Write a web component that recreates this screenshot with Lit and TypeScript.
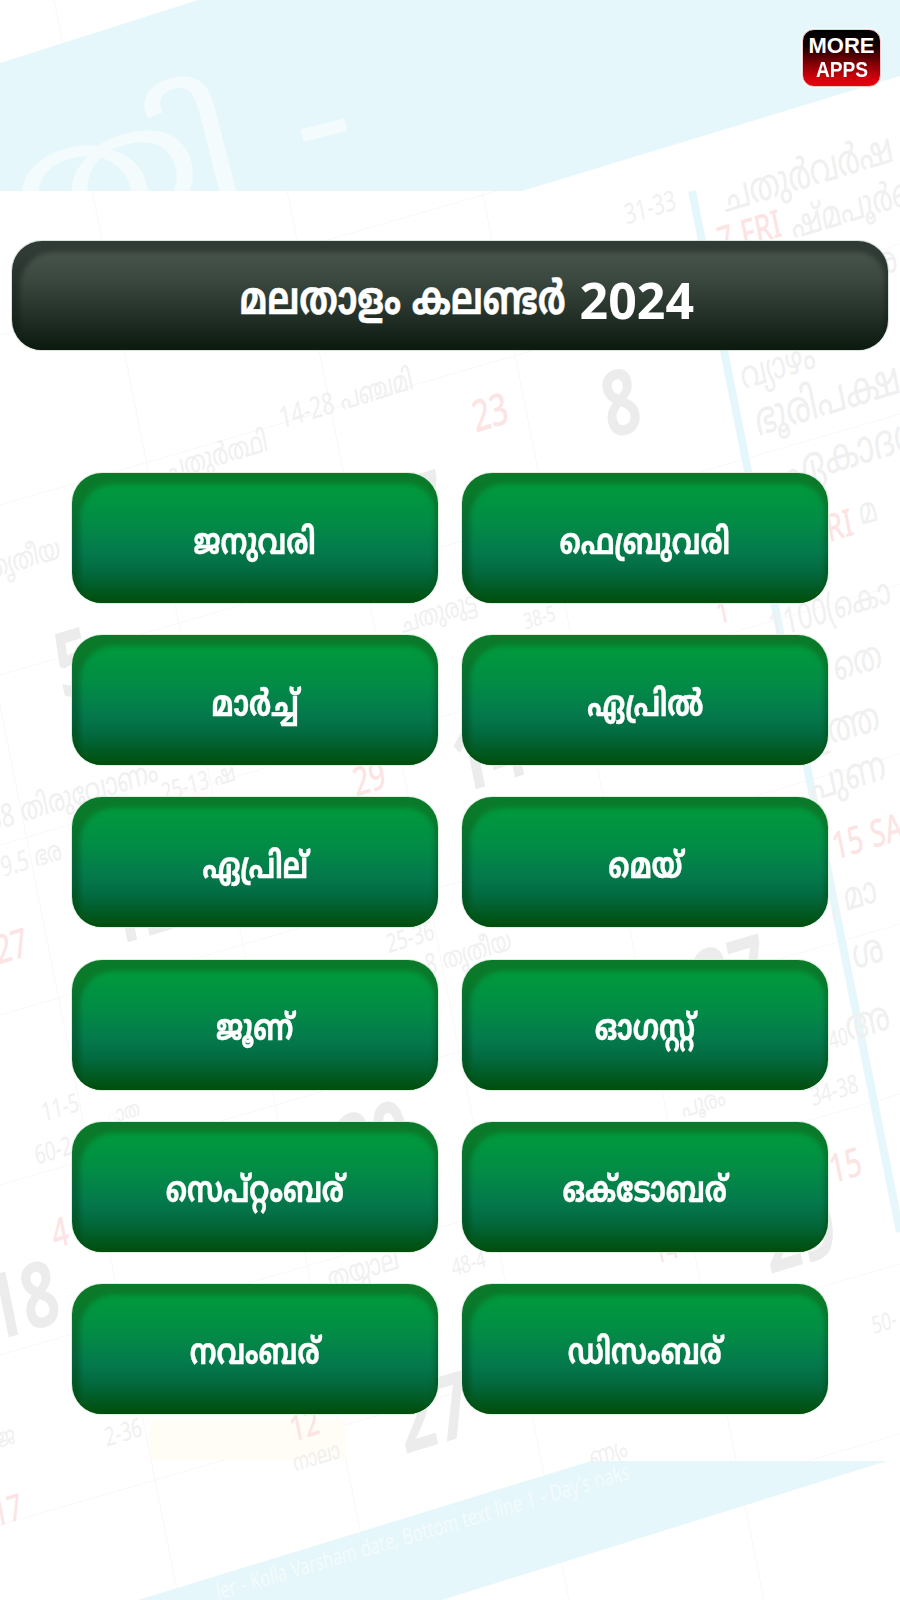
import { LitElement, html, css, svg } from "lit";
import { customElement } from "lit/decorators.js";

const MONTHS = ["ജനുവരി","ഫെബ്രുവരി","മാർച്ച്","ഏപ്രിൽ","ഏപ്രില്","മെയ്","ജൂണ്","ഓഗസ്റ്റ്","സെപ്റ്റംബര്","ഒക്ടോബര്","നവംബര്","ഡിസംബര്"];

type Mark = [number, number, string, number];
const GREY: Mark[] = [[627,402,"8",90],[432,505,"7",90],[80,662,"5",90],[495,752,"14",90],[147,905,"12",90],[737,975,"27",90],[380,1140,"20",90],[28,1300,"18",90],[805,1232,"29",90],[440,1412,"27",90]];
const RED: Mark[] = [[493,412,"23",44],[372,778,"29",40],[14,946,"27",40],[752,232,"7 FRI",38],[842,525,"RI",38],[870,836,"15 SA",38],[63,1232,"4",40],[848,1165,"15",40],[307,1425,"12",36],[10,1510,"17",36],[668,1250,"14",30],[725,612,"1",30]];
const SMALL: Mark[] = [[652,207,"31-33",28],[348,398,"14-28 പഞ്ചമി",30],[218,455,"ചതുർത്ഥി",30],[25,558,"തൃതീയ",30],[440,612,"ചതുരുട്ട",28],[541,617,"38-5",22],[75,795,"38 തിരുവോണം",32],[200,782,"25-13 ഷ",26],[33,858,"9.5 ഭര",28],[412,937,"25-36",26],[470,952,"8 തൃതീയ",28],[62,1107,"11-5",26],[55,1150,"60-2",26],[125,1112,"ാത",22],[365,1268,"തയ്യാല",30],[470,1263,"48-4",24],[840,1038,"40",24],[836,1090,"34-38",26],[705,1102,"പൂരം",26],[886,1322,"50-",24],[125,1432,"2-36",26],[8,1436,"ജ",26],[810,172,"ചതുർവർഷ",42],[862,205,"ഷ്മപൂർണ",38],[882,262,"ശ്ര",38],[780,365,"വ്യാഴം",38],[830,398,"ഭൂരിപക്ഷ",46],[862,448,"ഏകാദശി",46],[870,510,"മ",36],[832,608,"1100(കൊ",36],[860,660,"തെ",40],[846,725,"ഉത്ത",42],[850,775,"പുണ",42],[855,895,", മാ",38],[870,950,"ശ",42],[870,1020,"അ",42]];
const CUT: Mark[] = [[318,1456,"നാലാ",24],[610,1452,"ണ്യം",26]];

const T = (x:number,y:number) => `matrix(.69 -.21 .2 .98 ${x} ${y})`;
const mark = ([x,y,t,s]: Mark, cls: string) => svg`<text class=${cls} font-size=${s} text-anchor="middle" transform=${T(x,y+s*.35)}>${t}</text>`;
const HL = [165,335,505,675,845,1015,1185,1355,1525,1695,1865];
const VL = [-336,-141,54,249,444];

@customElement("app-root")
export class AppRoot extends LitElement {
  static styles = css`
    :host { display:block; width:900px; height:1600px; position:relative; overflow:hidden; background:#fff; font-family:"Noto Sans Malayalam","Noto Sans",sans-serif; }
    .bg { position:absolute; inset:0; }
    .bg text { font-family:"Noto Sans Malayalam","Noto Sans",sans-serif; }
    .grey { fill:#ececec; font-weight:700; }
    .red { fill:#fce4e4; font-weight:500; }
    .small { fill:#f0f0f0; }
    .ghost { fill:#f4fbfd; }
    .page { position:relative; display:flex; flex-direction:column; height:1600px; box-sizing:border-box; padding:29px 12px 0; }
    .more { align-self:flex-end; margin-right:7px; width:79px; height:58px; box-sizing:border-box; border:1px solid #f3c9c9; border-radius:12px; background:linear-gradient(#000 0%,#120002 28%,#7a0006 58%,#d0000c 85%,#e8000e 100%); box-shadow:0 0 0 1px rgba(255,255,255,.6); color:#fff; font:700 22px/24px "Liberation Sans",sans-serif; text-align:center; display:flex; flex-direction:column; justify-content:center; align-items:center; }
    .more span + span { transform:scaleX(.87); }
    .title { position:relative; overflow:hidden; margin-top:154px; height:109px; border-radius:30px; display:flex; align-items:center; justify-content:flex-end; gap:14px; padding:8px 194px 0 0; box-sizing:border-box; color:#fff; font-weight:700; font-size:46px; white-space:nowrap; background:linear-gradient(#2f3b34 0%,#2f3b34 12%,#1f2b24 55%,#0c1a10 100%); box-shadow:0 0 0 1px rgba(205,220,210,.8); }
    .title::before { content:""; position:absolute; inset:11px 3px -6px 8px; border-radius:34px 28px 0 0; background:linear-gradient(#47544b 0%,#3c4941 25%,#28352d 55%,#0c1a10 92%); filter:blur(2.5px); }
    .title .ml { position:relative; display:inline-block; transform:translateY(3px) scaleX(.74); transform-origin:right center; -webkit-text-stroke:.4px #fff; }
    .title .num { position:relative; font:700 50px "Noto Sans",sans-serif; }
    .grid { margin:123px 60px 0; display:grid; grid-template-columns:366px 366px; grid-auto-rows:130px; column-gap:24px; row-gap:32.2px; }
    .btn { position:relative; overflow:hidden; border-radius:30px; display:flex; align-items:center; justify-content:center; padding-top:14px; box-sizing:border-box; color:#fff; font-weight:700; font-size:36px; white-space:nowrap; background:linear-gradient(#0a7a2a 0%,#0a7a2a 15%,#03603a 60%,#004a0a 100%); box-shadow:0 0 0 1px rgba(220,238,222,.9); }
    .btn::before { content:""; position:absolute; inset:11px 3px -6px 8px; border-radius:34px 28px 0 0; background:linear-gradient(#009a3c 0%,#028c46 30%,#04794c 55%,#036a40 70%,#004d0c 95%); filter:blur(2.5px); }
    .btn span { position:relative; display:inline-block; transform:scaleX(.75); -webkit-text-stroke:.4px #fff; }
  `;
  render() {
    return html`
      <svg class="bg" width="900" height="1600" viewBox="0 0 900 1600">
        <defs><clipPath id="top"><rect width="900" height="191"/></clipPath></defs>
        ${HL.map((y) => svg`<line x1="0" y1=${y} x2="900" y2=${y-261} stroke="#f8f8f8"/>`)}
        ${VL.map((x) => svg`<line x1=${x} y1="0" x2=${x+320} y2="1600" stroke="#f8f8f8"/>`)}
        <rect x="150" y="1420" width="195" height="40" fill="#fffdf6"/>
        <line x1="692" y1="191" x2="900" y2="1232" stroke="#e6f7fb" stroke-width="8"/>
        ${GREY.map((m) => mark(m,"grey"))}
        ${RED.map((m) => mark(m,"red"))}
        ${SMALL.map((m) => mark(m,"small"))}
        ${CUT.map((m) => mark(m,"small"))}
        <polygon points="198,0 900,0 900,76 522,191 0,191 0,63" fill="#e6f7fb"/>
        <polygon points="138,1600 591,1461 887,1461 442,1600" fill="#e6f7fb"/>
        <line x1="614" y1="163" x2="624" y2="191" stroke="#fff" stroke-width="5"/>
        <g clip-path="url(#top)"><text class="ghost" font-size="190" transform="matrix(.944 -.24 .2 .78 27 248)">തി -</text></g>
        <text class="ghost" font-size="23" transform="matrix(.68 -.2 .2 .97 218 1600)">ler - Kolla Varsham date, Bottom text line 1 - Day's naks</text>
      </svg>
      <div class="page">
        <div class="more"><span>MORE</span><span>APPS</span></div>
        <div class="title"><span class="ml">മലതാളം കലണ്ടർ</span><span class="num">2024</span></div>
        <div class="grid">${MONTHS.map((m) => html`<div class="btn"><span>${m}</span></div>`)}</div>
      </div>`;
  }
}
